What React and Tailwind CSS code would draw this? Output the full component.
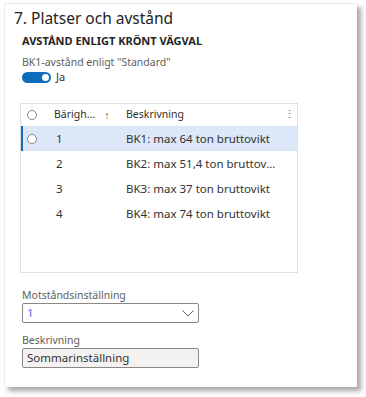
import React from 'react';

const rows = [
  { id: '1', text: 'BK1: max 64 ton bruttovikt', selected: true },
  { id: '2', text: 'BK2: max 51,4 ton bruttovikt' },
  { id: '3', text: 'BK3: max 37 ton bruttovikt' },
  { id: '4', text: 'BK4: max 74 ton bruttovikt' },
];

function Radio() {
  return <span className="block w-[10px] h-[10px] rounded-full border border-[#8a8886] bg-white" />;
}

export default function App() {
  return (
    <div
      className="w-[366px] h-[397px] bg-white overflow-hidden pt-[3px] pl-[4px]"
      style={{ fontFamily: '"Noto Sans", "Open Sans", sans-serif' }}
    >
      {/* Card */}
      <div className="w-[353px] h-[384px] bg-white border-l border-t border-[#ececec] shadow-[4px_4px_5px_rgba(0,0,0,0.35)] pt-[2px] pl-[9px] text-[#323130]">
        <h1 className="h-[24px] leading-[24px] text-[15.5px] text-[#242424]">7. Platser och avstånd</h1>

        <div className="ml-[8px] mt-[3px] h-[16px] leading-[16px] text-[11px] font-bold text-[#242424]">
          AVSTÅND ENLIGT KRÖNT VÄGVAL
        </div>

        <div className="ml-[8px] mt-[5px] h-[16px] leading-[16px] text-[10.5px] text-[#605e5c]">
          BK1-avstånd enligt "Standard"
        </div>

        {/* Toggle */}
        <div className="ml-[8px] h-[14px] flex items-center gap-[5px]">
          <span className="w-[29px] h-[11px] rounded-full bg-[#0f6cbd] flex items-center justify-end pr-[2px]">
            <span className="w-[7px] h-[7px] rounded-full bg-white" />
          </span>
          <span className="text-[11px] leading-[14px] text-[#323130]">Ja</span>
        </div>

        {/* Grid */}
        <div className="ml-[6px] mt-[19px] w-[278px] h-[170px] border border-[#e1dfdd] bg-white">
          <div className="h-[22px] flex items-center text-[10.5px] text-[#323130]">
            <span className="pl-[6px] w-[33px] shrink-0">
              <Radio />
            </span>
            <span className="w-[72px] shrink-0 flex items-center">
              <span>Bärigh...</span>
              <span className="ml-[9px] text-[#605e5c] text-[11px] font-light">↑</span>
            </span>
            <span className="flex-1">Beskrivning</span>
            <span className="w-[16px] text-center text-[#605e5c]">⋮</span>
          </div>
          {rows.map((r) => (
            <div
              key={r.id}
              className={
                r.selected
                  ? 'h-[25px] flex items-center text-[11.5px] bg-[#dce7f7] shadow-[inset_2px_0_0_#0f6cbd]'
                  : 'h-[25px] flex items-center text-[11.5px]'
              }
            >
              <span className="pl-[6px] w-[33px] shrink-0">{r.selected && <Radio />}</span>
              <span className="w-[72px] shrink-0 pl-[2px]">{r.id}</span>
              <span className="w-[150px] truncate">{r.text}</span>
            </div>
          ))}
        </div>

        {/* Motståndsinställning */}
        <div className="ml-[8px] mt-[14px] h-[16px] leading-[16px] text-[10.5px] text-[#605e5c]">
          Motståndsinställning
        </div>
        <div className="ml-[8px] w-[177px] h-[20px] border border-[#8a8886] rounded-[2px] bg-white flex items-center justify-between pl-[4px] pr-[4px]">
          <span className="text-[11.5px] text-[#4f6bed]">1</span>
          <svg width="12" height="7" viewBox="0 0 12 7" fill="none">
            <path d="M0.5 0.5 L6 6 L11.5 0.5" stroke="#605e5c" strokeWidth="1" />
          </svg>
        </div>

        {/* Beskrivning */}
        <div className="ml-[8px] mt-[9px] h-[16px] leading-[16px] text-[10.5px] text-[#605e5c]">
          Beskrivning
        </div>
        <div className="ml-[8px] w-[177px] h-[20px] border border-[#8a8886] rounded-[2px] bg-[#f3f2f1] flex items-center pl-[4px]">
          <span className="text-[11.5px] text-[#323130]">Sommarinställning</span>
        </div>
      </div>
    </div>
  );
}
